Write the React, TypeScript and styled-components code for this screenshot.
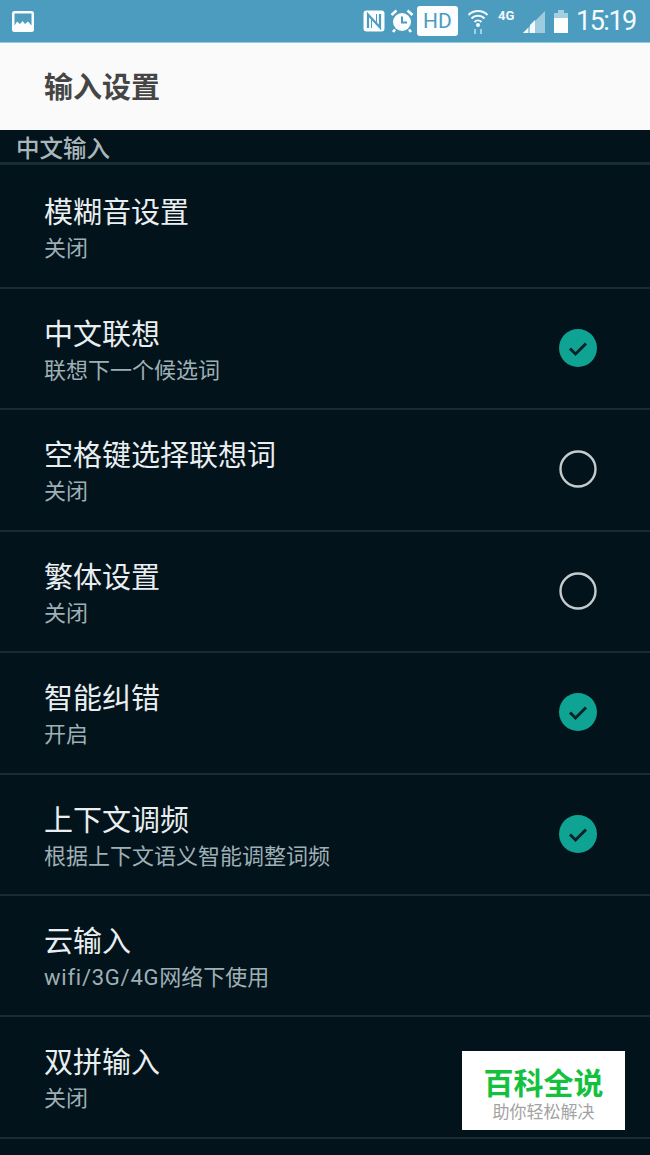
import React from "react";
import styled, { createGlobalStyle } from "styled-components";

const Global = createGlobalStyle`
  html, body { margin: 0; padding: 0; background: #03131b; }
  body { width: 650px; height: 1155px; overflow: hidden; font-family: "Roboto", "Noto Sans CJK SC", sans-serif; }
`;

const Page = styled.div`
  position: relative;
  width: 650px;
  height: 1155px;
  overflow: hidden;
  background: #03131b;
  display: flex;
  flex-direction: column;
`;

const StatusBar = styled.div`
  height: 43px;
  flex: none;
  box-sizing: border-box;
  background: #4b9cbf;
  border-bottom: 1px solid #8fcbe3;
  display: flex;
  align-items: center;
  padding: 0 14px 0 12px;
`;

const StatusRight = styled.div`
  margin-left: auto;
  display: flex;
  align-items: center;
`;

const HdBadge = styled.div`
  width: 41px;
  height: 30px;
  border-radius: 3px;
  background: #fbfdfe;
  color: #4b9cbf;
  font: 400 21px/30px "Roboto", sans-serif;
  text-align: center;
  margin: 0 9px 0 2px;
`;

const Clock = styled.div`
  width: 60px;
  color: #f4fafc;
  font: 400 27px/43px "Roboto", sans-serif;
  margin-left: 8px;
  letter-spacing: -1.5px;
  white-space: nowrap;
`;

const Header = styled.header`
  height: 87px;
  flex: none;
  box-sizing: border-box;
  background: #fafafa;
  display: flex;
  align-items: center;
  padding: 4px 0 0 44px;
  color: #454545;
  font-size: 29px;
  font-weight: 700;
  line-height: 1;
`;

const SectionTitle = styled.div`
  height: 32px;
  flex: none;
  border-bottom: 3px solid #1a2c33;
  padding-left: 16px;
  color: #a9b6ba;
  font-size: 23.5px;
  font-weight: 500;
  line-height: 39px;
  overflow: hidden;
`;

const List = styled.div`
  display: flex;
  flex-direction: column;
`;

const Row = styled.div<{ $first?: boolean }>`
  height: ${(p) => (p.$first ? "124px" : "121.4px")};
  flex: none;
  box-sizing: border-box;
  border-bottom: 2px solid #1b2b32;
  padding: ${(p) => (p.$first ? "30px" : "28px")} 53px 0 44px;
  display: flex;
  justify-content: space-between;
`;

const RowText = styled.div`
  display: flex;
  flex-direction: column;
`;

const RowTitle = styled.div`
  color: #e9eef0;
  font-size: 29px;
  line-height: 37px;
`;

const RowSub = styled.div`
  color: #9fb0b5;
  font-size: 22px;
  line-height: 33px;
`;

const Latin = styled.span`
  letter-spacing: 0.75px;
`;

const Toggle = styled.div`
  margin-top: 12px;
  width: 38px;
  height: 38px;
  flex: none;
`;

const Watermark = styled.div`
  position: absolute;
  left: 462px;
  top: 1051px;
  width: 163px;
  height: 79px;
  background: #fff;
  display: flex;
  flex-direction: column;
  align-items: center;
  padding-top: 16px;
  box-sizing: border-box;
`;

const WmTitle = styled.div`
  color: #14c13f;
  font-size: 30px;
  font-weight: 700;
  line-height: 34px;
`;

const WmSub = styled.div`
  color: #a3a3a3;
  font-size: 17px;
  line-height: 20px;
  margin-top: 1px;
`;

const Check = () => (
  <svg width="38" height="38" viewBox="0 0 38 38">
    <circle cx="19" cy="19" r="19" fill="#0fa393" />
    <path d="M11 19.5l5.5 5.5L27 14.5" fill="none" stroke="#06232a" strokeWidth="3" />
  </svg>
);

const Ring = () => (
  <svg width="38" height="38" viewBox="0 0 38 38">
    <circle cx="19" cy="19" r="17.5" fill="none" stroke="#c3cbcd" strokeWidth="2.4" />
  </svg>
);

const rows: { t: string; s: React.ReactNode; c?: boolean }[] = [
  { t: "模糊音设置", s: "关闭" },
  { t: "中文联想", s: "联想下一个候选词", c: true },
  { t: "空格键选择联想词", s: "关闭", c: false },
  { t: "繁体设置", s: "关闭", c: false },
  { t: "智能纠错", s: "开启", c: true },
  { t: "上下文调频", s: "根据上下文语义智能调整词频", c: true },
  { t: "云输入", s: <><Latin>wifi/3G/4G</Latin>网络下使用</> },
  { t: "双拼输入", s: "关闭" },
];

export default function App() {
  return (
    <Page>
      <Global />
      <StatusBar>
        <svg width="22" height="21" viewBox="0 0 22 21">
          <rect width="22" height="21" rx="2.5" fill="#fbfdfe" />
          <path d="M2.5 14.5V2.5h17v12l-3.5-4-3 2.5-2.5-3-2.5 3-3-2.5z" fill="#4b9cbf" />
        </svg>
        <StatusRight>
          <svg width="24" height="24" viewBox="0 0 24 24">
            <rect x="1.5" y="1.5" width="21" height="21" rx="3" fill="#fbfdfe" />
            <path d="M6 19V5.5l12 13V5" fill="none" stroke="#4b9cbf" strokeWidth="2.2" />
            <path d="M9.5 9V19M14.5 15V5" fill="none" stroke="#4b9cbf" strokeWidth="1" />
          </svg>
          <svg width="26" height="26" viewBox="0 0 26 26" style={{ marginLeft: 3 }}>
            <circle cx="13" cy="14" r="9" fill="#fbfdfe" />
            <path d="M13 8.5V14.5H18" fill="none" stroke="#4b9cbf" strokeWidth="2" />
            <path d="M2.5 7L7.5 2.5M23.5 7L18.5 2.5M6 21.5L4 24M20 21.5L22 24" stroke="#fbfdfe" strokeWidth="2.6" />
          </svg>
          <HdBadge>HD</HdBadge>
          <svg width="22" height="28" viewBox="0 0 22 28">
            <path d="M1.5 8a13.5 13.5 0 0 1 19 0M4.5 11.5a9 9 0 0 1 13 0M7.5 15a5 5 0 0 1 7 0" fill="none" stroke="#f4fafc" strokeWidth="2" />
            <circle cx="11" cy="18" r="2" fill="#f4fafc" />
            <path d="M8 22v5M14 22v5" stroke="#a4cfe0" strokeWidth="2" />
          </svg>
          <svg width="50" height="30" viewBox="0 0 50 30" style={{ marginLeft: 7 }}>
            <text x="2" y="14" fontFamily="Roboto, sans-serif" fontWeight="700" fontSize="13" fill="#f4fafc">4G</text>
            <path d="M27 27L49 5V27z" fill="#9ecbde" />
            <path d="M27 27l5-5v5zM34 27v-8l5-5v13z" fill="#f4fafc" />
          </svg>
          <svg width="14" height="23" viewBox="0 0 14 23" style={{ marginLeft: 8 }}>
            <path d="M0 3h14v20H0z" fill="#a4cfe0" />
            <path d="M4 0h6v3H4z" fill="#a4cfe0" />
            <path d="M0 8h14v15H0z" fill="#fbfdfe" />
          </svg>
          <Clock>15:19</Clock>
        </StatusRight>
      </StatusBar>
      <Header>输入设置</Header>
      <SectionTitle>中文输入</SectionTitle>
      <List>
        {rows.map((r, i) => (
          <Row key={r.t} $first={i === 0}>
            <RowText>
              <RowTitle>{r.t}</RowTitle>
              <RowSub>{r.s}</RowSub>
            </RowText>
            {r.c !== undefined && <Toggle>{r.c ? <Check /> : <Ring />}</Toggle>}
          </Row>
        ))}
      </List>
      <Watermark>
        <WmTitle>百科全说</WmTitle>
        <WmSub>助你轻松解决</WmSub>
      </Watermark>
    </Page>
  );
}
